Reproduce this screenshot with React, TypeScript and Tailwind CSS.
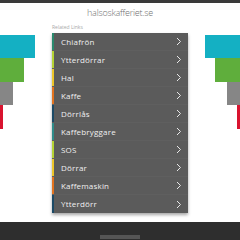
const links = [
  { label: 'Chiafrön', color: 'bg-[#2a8a6e]' },
  { label: 'Ytterdörrar', color: 'bg-[#b5d334]' },
  { label: 'Hal', color: 'bg-[#ecc62a]' },
  { label: 'Kaffe', color: 'bg-[#e2731f]' },
  { label: 'Dörrlås', color: 'bg-[#1c4a66]' },
  { label: 'Kaffebryggare', color: 'bg-[#2f8c8a]' },
  { label: 'SOS', color: 'bg-[#b5d334]' },
  { label: 'Dörrar', color: 'bg-[#ecc62a]' },
  { label: 'Kaffemaskin', color: 'bg-[#e2731f]' },
  { label: 'Ytterdörr', color: 'bg-[#1c4a66]' },
]

function Chevron() {
  return (
    <svg width="6" height="9" viewBox="0 0 6 9" fill="none">
      <path d="M1 1l3.5 3.5L1 8" stroke="#e8e8e8" strokeWidth="1" />
    </svg>
  )
}

export default function App() {
  return (
    <div className="w-[240px] h-[240px] bg-white overflow-hidden flex flex-col font-['Open_Sans',sans-serif]">
      <div className="h-[3px] bg-[#3a3a3a] shrink-0" />
      <div className="h-[19px] flex items-center justify-center text-[9px] font-light text-[#707070] tracking-tight">
        halsoskafferiet.se
      </div>
      <div className="flex flex-1">
        {/* left decoration */}
        <div className="w-[52px] flex flex-col pt-[13px]">
          <div className="w-[35px] h-[23px] bg-[#14b0c3]" />
          <div className="w-[24px] h-[24px] bg-[#5fae3c]" />
          <div className="w-[13px] h-[23px] bg-[#868686]" />
          <div className="w-[3px] h-[24px] bg-[#d9132f]" />
        </div>

        <div className="w-[136px] flex flex-col">
          <div className="h-[11px] text-[5px] leading-[11px] text-[#a8a8a8]">Related Links</div>
          <div className="flex flex-col bg-[#5b5b5b] shadow-[0_2px_3px_rgba(0,0,0,0.35)]">
            {links.map(link => (
              <div key={link.label} className="flex h-[18px] items-stretch border-b border-[#5f5f5f] last:border-b-0">
                <div className={`w-[2px] ${link.color}`} />
                <div className="flex-1 flex items-center justify-between pl-[7px] pr-[6px]">
                  <span className="text-[8px] text-[#f0f0f0] tracking-wide">{link.label}</span>
                  <Chevron />
                </div>
              </div>
            ))}
          </div>
        </div>

        {/* right decoration */}
        <div className="flex-1 flex flex-col items-end pt-[13px]">
          <div className="w-[35px] h-[23px] bg-[#14b0c3]" />
          <div className="w-[25px] h-[24px] bg-[#5fae3c]" />
          <div className="w-[13px] h-[23px] bg-[#868686]" />
          <div className="w-[3px] h-[24px] bg-[#d9132f]" />
        </div>
      </div>
      <div className="h-[18px] bg-[#2e2e2e] shrink-0 flex justify-center pt-[13px]">
        <div className="w-[40px] h-[4px] bg-[#555]" />
      </div>
    </div>
  )
}
